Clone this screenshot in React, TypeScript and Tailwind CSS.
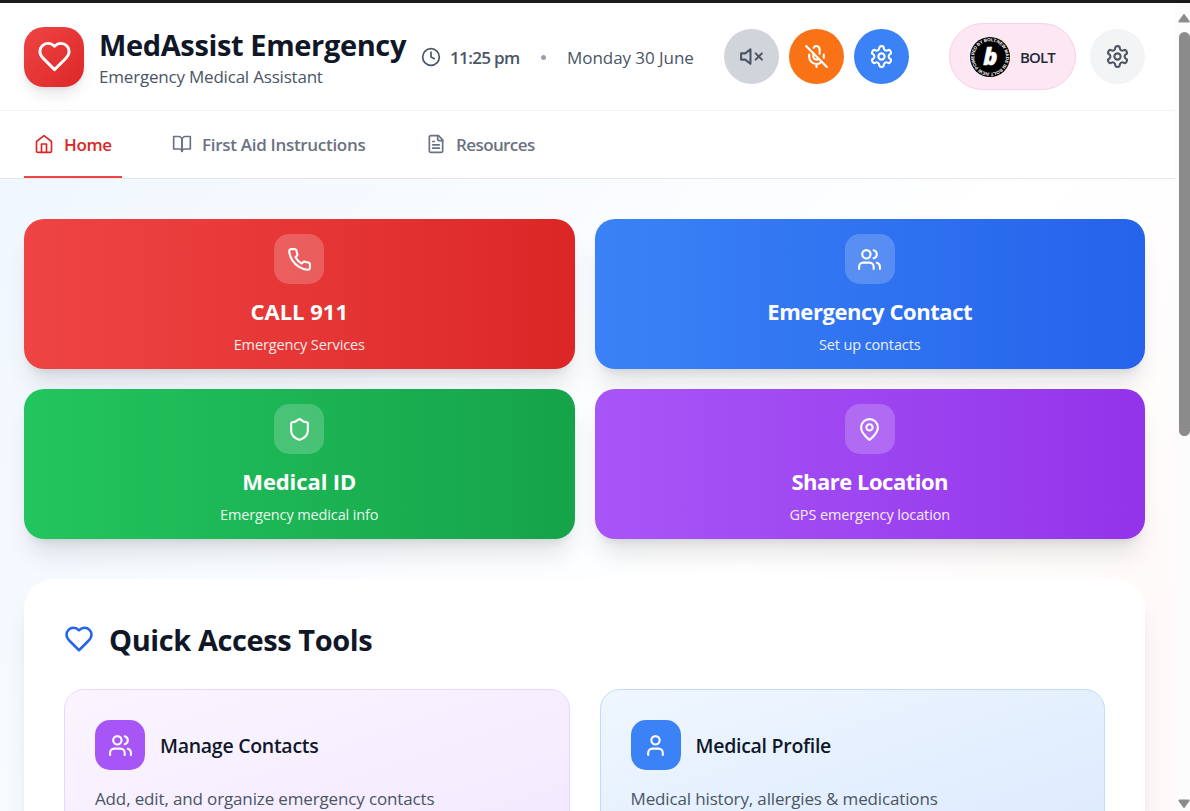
import type { ReactNode } from "react";

type IconProps = { className: string; width?: number; children: ReactNode };

function Icon({ className, width = 2, children }: IconProps) {
  return (
    <svg
      viewBox="0 0 24 24"
      fill="none"
      stroke="currentColor"
      strokeWidth={width}
      strokeLinecap="round"
      strokeLinejoin="round"
      className={`shrink-0 ${className}`}
    >
      {children}
    </svg>
  );
}

const heart = (
  <path d="M19 14c1.49-1.46 3-3.21 3-5.5A5.5 5.5 0 0 0 16.5 3c-1.76 0-3 .5-4.5 2-1.5-1.5-2.74-2-4.5-2A5.5 5.5 0 0 0 2 8.5c0 2.3 1.5 4.05 3 5.5l7 7Z" />
);
const clock = (
  <>
    <circle cx="12" cy="12" r="10" />
    <polyline points="12 6 12 12 16 14" />
  </>
);
const volumeX = (
  <>
    <polygon points="11 5 6 9 2 9 2 15 6 15 11 19 11 5" />
    <line x1="22" x2="16" y1="9" y2="15" />
    <line x1="16" x2="22" y1="9" y2="15" />
  </>
);
const micOff = (
  <>
    <line x1="2" x2="22" y1="2" y2="22" />
    <path d="M18.89 13.23A7.12 7.12 0 0 0 19 12v-2" />
    <path d="M5 10v2a7 7 0 0 0 12 5" />
    <path d="M15 9.34V5a3 3 0 0 0-5.68-1.33" />
    <path d="M9 9v3a3 3 0 0 0 5.12 2.12" />
    <line x1="12" x2="12" y1="19" y2="22" />
  </>
);
const settings = (
  <>
    <path d="M12.22 2h-.44a2 2 0 0 0-2 2v.18a2 2 0 0 1-1 1.73l-.43.25a2 2 0 0 1-2 0l-.15-.08a2 2 0 0 0-2.73.73l-.22.38a2 2 0 0 0 .73 2.73l.15.1a2 2 0 0 1 1 1.72v.51a2 2 0 0 1-1 1.74l-.15.09a2 2 0 0 0-.73 2.73l.22.38a2 2 0 0 0 2.73.73l.15-.08a2 2 0 0 1 2 0l.43.25a2 2 0 0 1 1 1.73V20a2 2 0 0 0 2 2h.44a2 2 0 0 0 2-2v-.18a2 2 0 0 1 1-1.73l.43-.25a2 2 0 0 1 2 0l.15.08a2 2 0 0 0 2.73-.73l.22-.39a2 2 0 0 0-.73-2.73l-.15-.08a2 2 0 0 1-1-1.74v-.5a2 2 0 0 1 1-1.74l.15-.09a2 2 0 0 0 .73-2.73l-.22-.38a2 2 0 0 0-2.73-.73l-.15.08a2 2 0 0 1-2 0l-.43-.25a2 2 0 0 1-1-1.73V4a2 2 0 0 0-2-2z" />
    <circle cx="12" cy="12" r="3" />
  </>
);
const home = (
  <>
    <path d="m3 9 9-7 9 7v11a2 2 0 0 1-2 2H5a2 2 0 0 1-2-2z" />
    <polyline points="9 22 9 12 15 12 15 22" />
  </>
);
const bookOpen = (
  <>
    <path d="M2 3h6a4 4 0 0 1 4 4v14a3 3 0 0 0-3-3H2z" />
    <path d="M22 3h-6a4 4 0 0 0-4 4v14a3 3 0 0 1 3-3h7z" />
  </>
);
const fileText = (
  <>
    <path d="M15 2H6a2 2 0 0 0-2 2v16a2 2 0 0 0 2 2h12a2 2 0 0 0 2-2V7Z" />
    <path d="M14 2v4a2 2 0 0 0 2 2h4" />
    <path d="M10 9H8" />
    <path d="M16 13H8" />
    <path d="M16 17H8" />
  </>
);
const phone = (
  <path d="M22 16.92v3a2 2 0 0 1-2.18 2 19.79 19.79 0 0 1-8.63-3.07 19.5 19.5 0 0 1-6-6 19.79 19.79 0 0 1-3.07-8.67A2 2 0 0 1 4.11 2h3a2 2 0 0 1 2 1.72 12.84 12.84 0 0 0 .7 2.81 2 2 0 0 1-.45 2.11L8.09 9.91a16 16 0 0 0 6 6l1.27-1.27a2 2 0 0 1 2.11-.45 12.84 12.84 0 0 0 2.81.7A2 2 0 0 1 22 16.92z" />
);
const users = (
  <>
    <path d="M16 21v-2a4 4 0 0 0-4-4H6a4 4 0 0 0-4 4v2" />
    <circle cx="9" cy="7" r="4" />
    <path d="M22 21v-2a4 4 0 0 0-3-3.87" />
    <path d="M16 3.13a4 4 0 0 1 0 7.75" />
  </>
);
const user = (
  <>
    <path d="M19 21v-2a4 4 0 0 0-4-4H9a4 4 0 0 0-4 4v2" />
    <circle cx="12" cy="7" r="4" />
  </>
);
const shield = (
  <path d="M20 13c0 5-3.5 7.5-7.66 8.95a1 1 0 0 1-.67-.01C7.5 20.5 4 18 4 13V6a1 1 0 0 1 1-1c2 0 4.5-1.2 6.24-2.72a1.17 1.17 0 0 1 1.52 0C14.51 3.81 17 5 19 5a1 1 0 0 1 1 1z" />
);
const mapPin = (
  <>
    <path d="M20 10c0 6-8 12-8 12s-8-6-8-12a8 8 0 0 1 16 0Z" />
    <circle cx="12" cy="10" r="3" />
  </>
);

function BoltBadge() {
  return (
    <svg viewBox="0 0 40 40" className="size-10 shrink-0">
      <defs>
        <path id="ring" d="M20 35.8a15.8 15.8 0 1 1 .01 0" />
      </defs>
      <circle cx="20" cy="20" r="20" fill="#000" />
      <text fill="#fff" fontSize="4.5" fontWeight="700" fontFamily="Liberation Sans, sans-serif">
        <textPath href="#ring" textLength="98">
          .NEW POWERED BY BOLT.NEW MADE IN BOLT
        </textPath>
      </text>
      <text
        x="20.5"
        y="28.4"
        fill="#fff"
        stroke="#fff"
        strokeWidth="0.5"
        fontSize="23.5"
        fontWeight="800"
        fontStyle="italic"
        textAnchor="middle"
        fontFamily="Open Sans, sans-serif"
      >
        b
      </text>
    </svg>
  );
}

function Header() {
  return (
    <header className="flex h-[108px] items-center border-b border-gray-100 bg-white pr-[30px] pl-6">
      <div className="flex size-[60px] shrink-0 items-center justify-center rounded-[20px] bg-linear-to-br from-[#ef4444] to-[#dc2626] text-white shadow-[0_10px_15px_-3px_rgba(0,0,0,0.1),0_4px_6px_-4px_rgba(0,0,0,0.1)]">
        <Icon className="size-[35px]">{heart}</Icon>
      </div>
      <div className="ml-[15px] w-[322px] pt-[3px] whitespace-nowrap">
        <h1 className="text-[29px] leading-[37px] font-bold tracking-[-0.37px] text-gray-900">MedAssist Emergency</h1>
        <p className="mt-px text-[17px] leading-[26px] tracking-[-0.2px] text-gray-600">Emergency Medical Assistant</p>
      </div>
      <div className="flex w-[303px] items-center whitespace-nowrap text-gray-600">
        <Icon className="size-5">{clock}</Icon>
        <span className="ml-[9px] w-[91px] pt-0.5 text-[17px] font-semibold tracking-[-0.65px]">11:25 pm</span>
        <span className="mt-0.5 size-[5px] rounded-full bg-gray-400" />
        <span className="ml-[21px] pt-0.5 text-[17px] tracking-[-0.05px]">Monday 30 June</span>
      </div>
      <div className="flex gap-[10px]">
        <button className="flex size-[55px] items-center justify-center rounded-full bg-[#d1d5db] text-[#4b5563]">
          <Icon className="size-[25px]">{volumeX}</Icon>
        </button>
        <button className="flex size-[55px] items-center justify-center rounded-full bg-[#f97316] text-white">
          <Icon className="size-[25px]">{micOff}</Icon>
        </button>
        <button className="flex size-[55px] items-center justify-center rounded-full bg-[#3b82f6] text-white">
          <Icon className="size-[25px]">{settings}</Icon>
        </button>
      </div>
      <div className="ml-auto flex items-center gap-[14px]">
        <a className="flex h-[67px] w-[127px] items-center gap-[10px] rounded-full border border-[#fbcfe8] bg-[#fce7f3] pl-5 text-[15px] font-semibold text-gray-800">
          <BoltBadge />
          <span className="pt-px tracking-[-0.9px]">BOLT</span>
        </a>
        <button className="flex size-[55px] items-center justify-center rounded-full bg-gray-100 text-[#4b5563]">
          <Icon className="size-[25px]">{settings}</Icon>
        </button>
      </div>
    </header>
  );
}

function Nav() {
  return (
    <nav className="flex h-[68px] gap-10 border-b border-gray-200 bg-white pl-6 text-[17px] font-semibold whitespace-nowrap text-gray-500">
      <a className="flex w-[98px] items-center gap-[10px] border-b-2 border-[#ef4444] pl-[10px] text-[#dc2626]">
        <Icon className="size-5">{home}</Icon>
        <span className="pt-0.5 tracking-[-0.35px]">Home</span>
      </a>
      <a className="flex w-[214px] items-center gap-[10px] border-b-2 border-transparent pl-[10px]">
        <Icon className="size-5">{bookOpen}</Icon>
        <span className="pt-0.5 tracking-[-0.3px]">First Aid Instructions</span>
      </a>
      <a className="flex items-center gap-[10px] border-b-2 border-transparent pl-[10px]">
        <Icon className="size-5">{fileText}</Icon>
        <span className="pt-0.5 tracking-[-0.6px]">Resources</span>
      </a>
    </nav>
  );
}

type ActionProps = {
  tone: string;
  tracking: string;
  icon: ReactNode;
  title: ReactNode;
  text: ReactNode;
};

function ActionCard({ tone, tracking, icon, title, text }: ActionProps) {
  return (
    <button
      className={`flex h-[150px] flex-col items-center rounded-[20px] bg-linear-to-r pt-[15px] text-white shadow-[0_20px_25px_-5px_rgba(0,0,0,0.1),0_8px_10px_-6px_rgba(0,0,0,0.1)] ${tone}`}
    >
      <span className="flex size-[50px] items-center justify-center rounded-[15px] bg-white/20">
        <Icon className="size-[25px]">{icon}</Icon>
      </span>
      <span className={`mt-[12px] text-[22px] leading-[30px] font-bold ${tracking}`}>{title}</span>
      <span className="mt-[8px] text-[14.5px] leading-[22px] tracking-[-0.12px] opacity-90">{text}</span>
    </button>
  );
}

type ToolProps = {
  tone: string;
  tile: string;
  icon: ReactNode;
  title: ReactNode;
  text: ReactNode;
};

function ToolCard({ tone, tile, icon, title, text }: ToolProps) {
  return (
    <div className={`h-[172px] rounded-[20px] border bg-linear-to-br p-[30px] ${tone}`}>
      <div className="flex items-center gap-[15px]">
        <span className={`flex size-[50px] items-center justify-center rounded-[15px] text-white ${tile}`}>
          <Icon className="size-[25px]">{icon}</Icon>
        </span>
        <h3 className="pt-0.5 text-[19.5px] font-semibold tracking-[-0.28px] text-gray-900">{title}</h3>
      </div>
      <p className="mt-[15px] text-[17px] leading-[28px] tracking-[-0.14px] whitespace-nowrap text-gray-600">{text}</p>
    </div>
  );
}

function Scrollbar() {
  return (
    <div className="flex w-[15px] shrink-0 flex-col items-end overflow-hidden bg-[#fcfcfc] pt-[10px]">
      <svg viewBox="0 0 12 10" className="h-[10px] w-3">
        <path d="M6 0.5 11.5 8q.4 1.5-1 1.5H1.5q-1.4 0-1-1.5z" fill="#8b8b8b" />
      </svg>
      <div className="mt-[9px] h-[404px] w-[11px] rounded-full bg-[#8b8b8b]" />
      <svg viewBox="0 0 12 10" className="mt-auto mb-[2px] h-[10px] w-3">
        <path d="M6 9.5 11.5 2q.4-1.5-1-1.5H1.5q-1.4 0-1 1.5z" fill="#8b8b8b" />
      </svg>
    </div>
  );
}

export default function App() {
  return (
    <div className="flex h-[811px] w-[1190px] flex-col overflow-hidden bg-white font-['Open_Sans','Noto_Sans',sans-serif]">
      <div className="h-[3px] shrink-0 bg-[#1c1a1b]" />
      <div className="flex min-h-0 flex-1">
        <div className="min-w-0 flex-1 overflow-hidden">
          <div className="h-[1530px] bg-linear-to-br from-[#eff6ff] via-white to-[#fef2f2]">
            <Header />
            <Nav />
            <main className="pt-10 pr-[30px] pl-6">
              <div className="grid grid-cols-2 gap-5">
                <ActionCard
                  tone="from-[#ef4444] to-[#dc2626]"
                  tracking="tracking-normal"
                  icon={phone}
                  title="CALL 911"
                  text="Emergency Services"
                />
                <ActionCard
                  tone="from-[#3b82f6] to-[#2563eb]"
                  tracking="tracking-[-0.42px]"
                  icon={users}
                  title="Emergency Contact"
                  text="Set up contacts"
                />
                <ActionCard
                  tone="from-[#22c55e] to-[#16a34a]"
                  tracking="tracking-[-0.1px]"
                  icon={shield}
                  title="Medical ID"
                  text="Emergency medical info"
                />
                <ActionCard
                  tone="from-[#a855f7] to-[#9333ea]"
                  tracking="tracking-[-0.5px]"
                  icon={mapPin}
                  title="Share Location"
                  text="GPS emergency location"
                />
              </div>
              <section className="mt-10 h-[700px] rounded-[30px] bg-white px-10 pt-10 shadow-[0_20px_25px_-5px_rgba(0,0,0,0.1),0_8px_10px_-6px_rgba(0,0,0,0.1)]">
                <div className="flex h-10 items-center gap-[15px]">
                  <Icon className="size-[30px] text-[#2563eb]">{heart}</Icon>
                  <h2 className="pt-0.5 text-[29px] font-bold tracking-[-0.42px] text-gray-900">Quick Access Tools</h2>
                </div>
                <div className="mt-[30px] grid grid-cols-2 gap-[30px]">
                  <ToolCard
                    tone="border-[#e9d5ff] from-[#faf5ff] to-[#f3e8ff]"
                    tile="bg-[#a855f7]"
                    icon={users}
                    title="Manage Contacts"
                    text="Add, edit, and organize emergency contacts"
                  />
                  <ToolCard
                    tone="border-[#bfdbfe] from-[#eff6ff] to-[#dbeafe]"
                    tile="bg-[#3b82f6]"
                    icon={user}
                    title="Medical Profile"
                    text="Medical history, allergies & medications"
                  />
                </div>
              </section>
            </main>
          </div>
        </div>
        <Scrollbar />
      </div>
    </div>
  );
}
